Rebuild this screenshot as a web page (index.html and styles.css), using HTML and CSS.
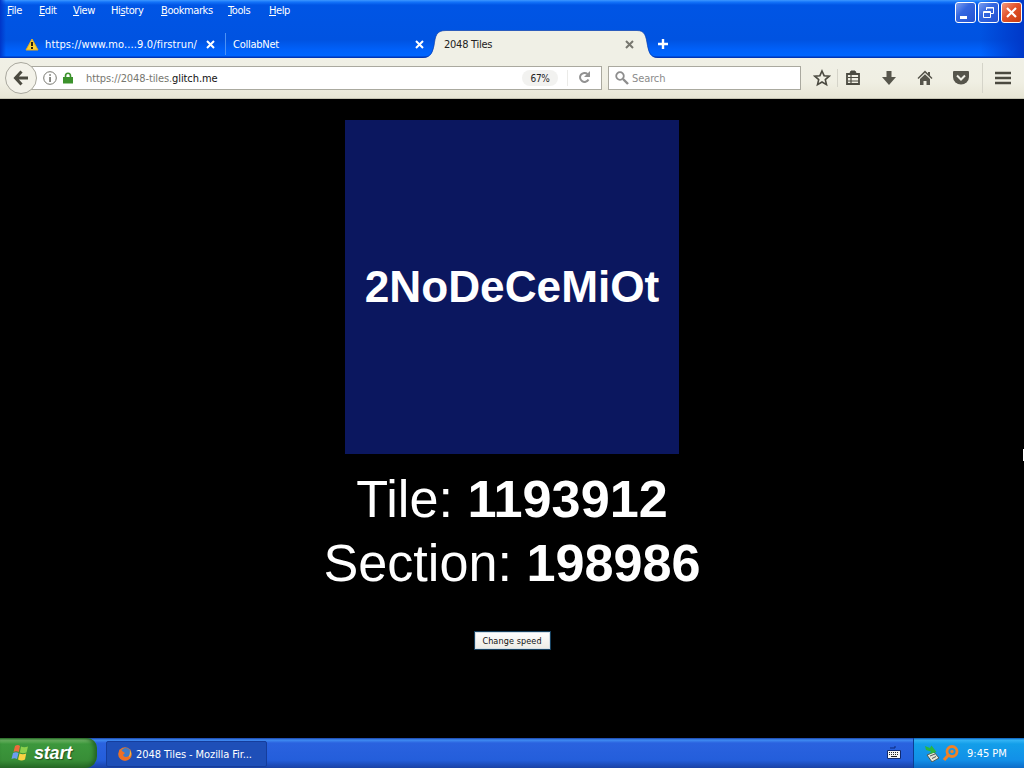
FILE: index.html
```
<!DOCTYPE html>
<html lang="en">
<head>
    <meta charset="UTF-8">
    <title>2048 Tiles</title>
    <link rel="stylesheet" href="styles.css">
</head>
<body>
    <header class="titlebar">
        <div class="top-row">
            <nav class="menu">
                <span class="m-file"><u>F</u>ile</span>
                <span class="m-edit"><u>E</u>dit</span>
                <span class="m-view"><u>V</u>iew</span>
                <span class="m-history">Hi<u>s</u>tory</span>
                <span class="m-bookmarks"><u>B</u>ookmarks</span>
                <span class="m-tools"><u>T</u>ools</span>
                <span class="m-help"><u>H</u>elp</span>
            </nav>
            <div class="window-buttons">
                <div class="win-btn"><svg width="19" height="19"><path d="M4 13h7v3H4z" fill="#fff"/></svg></div>
                <div class="win-btn"><svg width="19" height="19" fill="none" stroke="#fff"><path d="M7.500 7V4.500h7v6H12M7 5h8"/><path d="M4.500 8.500h7v6h-7zM4 9.500h8"/></svg></div>
                <div class="win-btn win-close"><svg width="19" height="19"><path d="M5 5l9 9M14 5l-9 9" stroke="#fff" stroke-width="2.200"/></svg></div>
            </div>
        </div>
        <div class="tabs">
            <div class="tab tab-first">
                <svg class="warn" width="14" height="13"><path d="M7 1L13 12H1z" fill="#f8cf35" stroke="#e6ac20" stroke-linejoin="round"/><path d="M6 4h2v4H6zM6 9h2v2H6z" fill="#2d2410"/></svg>
                <span class="tab-label label-url">https://www.mo....9.0/firstrun/</span>
                <svg class="tab-x" width="9" height="9"><path d="M1 1l7 7M8 1l-7 7" stroke="#fff" stroke-width="2"/></svg>
            </div>
            <div class="tab tab-second">
                <span class="tab-label label-collab">CollabNet</span>
                <svg class="tab-x" width="9" height="9"><path d="M1 1l7 7M8 1l-7 7" stroke="#fff" stroke-width="2"/></svg>
            </div>
            <div class="tab tab-active">
                <svg class="tab-shape" width="236" height="28"><path d="M0 28C8 27.500 9.500 23 11 16C12.500 6 13 .5 23 .5H214C222 .5 223 6 224.500 16C226 23 227 27.500 235 28z" fill="#f0f0e6"/><path d="M0 27.500C8 27 9.500 22 11 15.500C12.500 6 13 .5 23 .5H214C222 .5 223 6 224.500 15.500C226 22 227 27 235 27.500" fill="none" stroke="#0a3fae" stroke-opacity=".7"/></svg>
                <span class="tab-label label-tiles">2048 Tiles</span>
                <svg class="tab-x" width="9" height="9"><path d="M1 1l7 7M8 1l-7 7" stroke="#77776f" stroke-width="2"/></svg>
            </div>
            <svg class="new-tab" width="12" height="12"><path d="M6 1v10M1 6h10" stroke="#fff" stroke-width="2.400"/></svg>
        </div>
    </header>

    <div class="toolbar">
        <div class="back"><svg width="18" height="18"><path d="M16 9H4M9.500 2.500L3.500 9l6 6.500" fill="none" stroke="#4b4a40" stroke-width="3"/></svg></div>
        <div class="urlbar">
            <svg width="14" height="14"><circle cx="7" cy="7" r="6.300" fill="none" stroke="#77776f"/><path d="M6.300 6h1.500v5H6.300zM6.300 3.200h1.500v1.600H6.300z" fill="#66665f"/></svg>
            <svg class="lock" width="10" height="12"><path d="M2.500 6V4a2.500 2.800 0 0 1 5 0v2" fill="none" stroke="#3c922c" stroke-width="1.600"/><path d="M0 5h10v6.500H0z" fill="#3c922c"/></svg>
            <span class="url">https://2048-tiles.<b>glitch.me</b></span>
            <span class="zoom">67%</span>
            <span class="url-sep"></span>
            <svg class="reload" width="13" height="13"><path d="M10.500 8.500A4.500 4.500 0 1 1 9.500 3" fill="none" stroke="#929292" stroke-width="2"/><path d="M12 0v6H6z" fill="#929292"/></svg>
        </div>
        <div class="search">
            <svg width="14" height="14"><circle cx="5" cy="5" r="3.800" fill="none" stroke="#8d8d8d" stroke-width="1.800"/><path d="M8 8l5 5" stroke="#8d8d8d" stroke-width="2.400"/></svg>
            <span>Search</span>
        </div>
        <div class="tools">
            <svg width="18" height="18"><path d="M9 2l2.100 4.700 5.100.5-3.900 3.400 1.200 5.100L9 13l-4.500 2.700 1.200-5.100-3.900-3.400 5.100-.5z" fill="none" stroke="#4b4a40" stroke-width="1.600"/></svg>
            <i class="sep"></i>
            <svg width="16" height="18"><path d="M2 5h12v10H2z" fill="none" stroke="#4b4a40" stroke-width="1.800"/><path d="M5 4l1-2h4l1 2z" fill="#4b4a40" stroke="#4b4a40"/><path d="M3 8.500h11M3 12h11M6 6v9" stroke="#4b4a40" stroke-width="1.200"/></svg>
            <svg class="t-down" width="16" height="18"><path d="M5.500 2h5v6H15l-7 8-7-8h4.500z" fill="#56554b"/></svg>
            <svg class="t-home" width="16" height="18"><path d="M8 1.500L11 4.500V3h2v3.500l2.500 2.500-1 1L8 3.800 1.500 10l-1-1z" fill="#56554b"/><path d="M8 5.200l5 4.800v6H9.500v-4h-3v4H3v-6z" fill="#56554b"/></svg>
            <svg class="t-pocket" width="18" height="18"><path d="M2 2h14a1 1 0 0 1 1 1v5a8 7.500 0 0 1-16 0V3a1 1 0 0 1 1-1z" fill="#56554b"/><path d="M5 6.500l4 4 4-4" fill="none" stroke="#f0f0e6" stroke-width="2"/></svg>
            <i class="sep sep-menu"></i>
            <svg class="t-menu" width="18" height="18"><path d="M1 4h16M1 9h16M1 14h16" stroke="#4b4a40" stroke-width="2.600"/></svg>
        </div>
    </div>

    <main class="page">
        <div class="tile">2NoDeCeMiOt</div>
        <div class="info">Tile: <strong>1193912</strong></div>
        <div class="info">Section: <strong>198986</strong></div>
        <button class="speed">Change speed</button>
        <!-- mouse pointer, almost fully off the right edge -->
        <div class="pointer"></div>
    </main>

    <footer class="taskbar">
        <div class="start">
            <svg width="18" height="18"><path d="M4 2Q7 0 9 2L7.800 8Q5 6.500 2.500 8z" fill="#ed6b3c"/><path d="M10 2.500Q13 4 17 2.500L15.500 8.500Q12 10 8.800 8.500z" fill="#8bd04c"/><path d="M2 9Q5 7.500 7.500 9L6 15Q3.500 13.500.5 15z" fill="#6c9df0"/><path d="M8.500 9.500Q12 11 15.200 9.500L14 15.500Q10.500 17.500 7 15.500z" fill="#f9d243"/></svg>
            <span>start</span>
        </div>
        <div class="task">
            <svg width="14" height="14"><circle cx="7" cy="7" r="6.800" fill="#e6762a"/><circle cx="7.800" cy="5.500" r="4.500" fill="#3e7bc8"/><path d="M1 3q1 1 3 1l3 2-2 2q1 3 5 2l3-3q-1 6-6 6.500Q0 13 1 3z" fill="#ee6f25"/><path d="M12 3q2 3 .5 6l-1.500 1q1-3 1-7z" fill="#f7b83d"/></svg>
            <span>2048 Tiles - Mozilla Fir...</span>
        </div>
        <svg class="keyboard" width="14" height="14"><path d="M3 2h5V0" fill="none" stroke="#0d2a7c"/><path d="M.5 4.500h13v8H.5z" fill="#f4f4f4" stroke="#102a70"/><path d="M2 6.500h10M2 8.500h10" stroke="#222" stroke-dasharray="1 1"/><path d="M4 10.500h6" stroke="#222"/></svg>
        <div class="tray">
            <svg width="15" height="17"><path d="M2 10l7-3 5 6-7 4z" fill="#e4e6d8" stroke="#4c5a55"/><path d="M5 11l5-2M7 13.500l4-2" stroke="#555"/><path d="M0 1l5 2 1.500-2.500 5 6.500-7 2 1.500-2.500L1 5z" fill="#29b643"/></svg>
            <svg class="magnifier" width="17" height="17"><circle cx="10" cy="6.500" r="5" fill="none" stroke="#ef8227" stroke-width="2.800"/><circle cx="10" cy="6.500" r="1.700" fill="#ef8227"/><path d="M6.500 10L2 15" stroke="#ef8227" stroke-width="3.200"/></svg>
            <span>9:45 PM</span>
        </div>
    </footer>
</body>
</html>
```

FILE: styles.css
```
:root {
    --ui-font: "DejaVu Sans Condensed", "DejaVu Sans", sans-serif;
    --chrome: #f0f0e6;
}

* {
    margin: 0;
    padding: 0;
    box-sizing: border-box;
}

body {
    width: 1024px;
    height: 768px;
    overflow: hidden;
    display: flex;
    flex-direction: column;
    background: #000;
    font-family: var(--ui-font);
    font-stretch: condensed;
    font-size: 11px;
    letter-spacing: -0.4px;
    white-space: nowrap;
}

svg {
    display: block;
    flex: none;
}

/* Title bar */
.titlebar {
    height: 58px;
    flex: none;
    background: linear-gradient(90deg, #0035c8 0, transparent 6px, transparent 980px, #0038c8 1024px),
        linear-gradient(#3e98ff 0, #1474fa 2px, #0055e5 5px, #0053e1 40px, #0061fa 50px, #0066ff 56px, #0036b8 57px);
    color: #fff;
}

.top-row {
    height: 30px;
    display: flex;
    justify-content: space-between;
    padding: 2px 2px 0 7px;
}

.menu {
    display: flex;
    line-height: 18px;
}

.m-file { width: 32px; }
.m-edit { width: 34px; }
.m-view { width: 38px; }
.m-history { width: 50px; }
.m-bookmarks { width: 67px; }
.m-tools { width: 41px; }

.window-buttons {
    display: flex;
    gap: 2px;
}

.win-btn {
    width: 21px;
    height: 21px;
    border: 1px solid #fff;
    border-radius: 3px;
    background: linear-gradient(135deg, #7d9ff0, #3467e0 40%, #2352d2);
}

.win-close {
    background: linear-gradient(135deg, #f09a80, #e2522b 45%, #c83c10);
}

.tabs {
    height: 28px;
    display: flex;
    align-items: center;
}

.tab {
    display: flex;
    align-items: center;
    height: 28px;
}

.tab-first {
    width: 225px;
    padding-left: 25px;
}

.tab-second {
    width: 203px;
    height: 22px;
    padding-left: 7px;
    border-left: 1px solid #4c91f5;
}

.tab-active {
    position: relative;
    width: 228px;
    padding-left: 16px;
    color: #222;
}

.tab-shape {
    position: absolute;
    left: -5px;
    top: 0;
}

.tab-label,
.tab-active .tab-x {
    position: relative;
}

.tab-label {
    letter-spacing: -0.25px;
}

.label-url {
    width: 167px;
    padding-left: 6px;
    letter-spacing: 0.12px;
}

.label-collab { width: 182px; }
.label-tiles { width: 181px; }

.new-tab {
    margin-left: 1px;
}

/* Navigation toolbar */
.toolbar {
    height: 41px;
    flex: none;
    display: flex;
    align-items: center;
    background: linear-gradient(var(--chrome), #f0efe3 60%, #e7e5d5);
    border-bottom: 1px solid #c5c3b3;
    padding: 0 0 1px 5px;
}

.back {
    width: 32px;
    height: 32px;
    flex: none;
    display: flex;
    align-items: center;
    justify-content: center;
    border: 1px solid #a9a89e;
    border-radius: 50%;
    background: #f3f2e9;
    z-index: 1;
}

.urlbar {
    width: 573px;
    height: 24px;
    margin-left: -8px;
    display: flex;
    align-items: center;
    padding-left: 13px;
    border: 1px solid #aaa99f;
    background: #fff;
}

.lock {
    margin-left: 6px;
}

.url {
    width: 436px;
    margin-left: 13px;
    padding-top: 2px;
    color: #77776f;
    letter-spacing: -0.1px;
}

.url b {
    font-weight: normal;
    color: #111;
}

.zoom {
    width: 36px;
    height: 16px;
    line-height: 17px;
    border-radius: 8px;
    background: #f2f2f0;
    text-align: center;
    font-size: 10px;
    color: #222;
}

.url-sep {
    width: 1px;
    height: 16px;
    margin: 0 10px 0 9px;
    background: #ebebe8;
}

.search {
    width: 193px;
    height: 24px;
    margin-left: 6px;
    display: flex;
    align-items: center;
    gap: 3px;
    padding-left: 6px;
    border: 1px solid #aaa99f;
    background: #fff;
    color: #8b8b8b;
    letter-spacing: -0.1px;
}

.search span {
    padding-top: 2px;
}

.tools {
    display: flex;
    align-items: center;
    margin-left: 12px;
}

.sep {
    width: 1px;
    height: 18px;
    margin: 0 7px 0 6px;
    background: #d5d4c9;
}

.t-down,
.t-home {
    margin-left: 20px;
}

.t-pocket {
    margin-left: 19px;
}

.sep-menu {
    height: 30px;
    margin: 0 11px 0 12px;
}

/* Page */
.page {
    position: relative;
    height: 639px;
    flex: none;
    display: flex;
    flex-direction: column;
    align-items: center;
    padding-top: 21px;
    background: #000;
    color: #fff;
    font-family: "Liberation Sans", Arial, sans-serif;
    font-stretch: normal;
    letter-spacing: 0;
}

.tile {
    width: 334px;
    height: 334px;
    margin-bottom: 13px;
    background: #0b175f;
    font-size: 44.200px;
    font-weight: bold;
    line-height: 333px;
    text-align: center;
}

.info {
    font-size: 52.200px;
    line-height: 64px;
}

.speed {
    width: 77px;
    height: 19px;
    margin-top: 36px;
    border: 1px solid #17415f;
    box-shadow: inset 0 0 0 1px #d5dfe6;
    background: linear-gradient(#fff, #ecebe5);
    font-family: var(--ui-font);
    font-stretch: condensed;
    font-size: 9px;
    line-height: 15px;
    padding-top: 1px;
    letter-spacing: 0.1px;
    color: #111;
}

.pointer {
    position: absolute;
    right: 0;
    top: 350px;
    width: 1px;
    height: 12px;
    background: #fff;
}

/* Taskbar */
.taskbar {
    height: 30px;
    flex: none;
    display: flex;
    align-items: center;
    background: linear-gradient(#1941a5 0, #3f8cf2 2px, #2a62df 5px, #245edb 22px, #1941a5 30px);
    color: #fff;
}

.start {
    width: 97px;
    height: 30px;
    display: flex;
    align-items: center;
    gap: 5px;
    padding-left: 11px;
    border-radius: 0 10px 12px 0;
    background: linear-gradient(#2c6f2c 0, #6fb566 2px, #3c973c 6px, #388e37 22px, #276b27 30px);
    box-shadow: inset -3px 0 4px #236323;
    font-family: "Liberation Sans", Arial, sans-serif;
    font-stretch: normal;
    font-size: 18px;
    font-weight: bold;
    font-style: italic;
    letter-spacing: -0.2px;
    text-shadow: 1px 1px 1px #245021;
}

.task {
    width: 161px;
    height: 26px;
    margin: 2px 0 0 9px;
    display: flex;
    align-items: center;
    gap: 4px;
    padding-left: 11px;
    border: 1px solid #153d9c;
    border-radius: 2px;
    background: #1e4fb8;
    letter-spacing: -0.08px;
}

.keyboard {
    margin-left: 620px;
}

.tray {
    width: 111px;
    height: 30px;
    margin-left: 12px;
    display: flex;
    align-items: center;
    padding-left: 11px;
    border-left: 1px solid #0b3e94;
    background: linear-gradient(#0c59b9 0, #34b4f5 2px, #139ee9 6px, #1290e8 22px, #0c6cc8 30px);
    letter-spacing: 0;
}

.magnifier {
    margin: 0 8px 0 2px;
}
```
